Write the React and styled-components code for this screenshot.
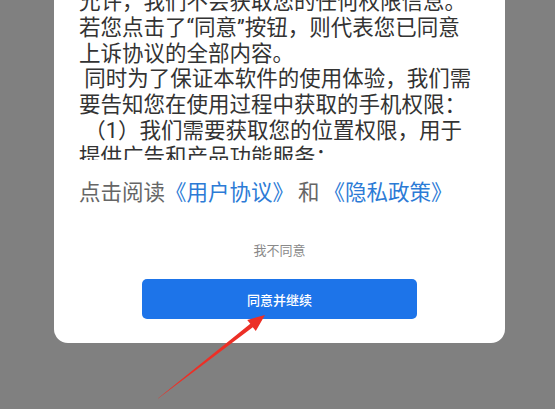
import React from "react";
import styled, { createGlobalStyle } from "styled-components";

const Global = createGlobalStyle`
  html, body {
    margin: 0;
    padding: 0;
    background: #808080;
    overflow: hidden;
  }
  body {
    font-family: "Roboto", "Noto Sans CJK SC", sans-serif;
  }
`;

const Page = styled.div`
  position: relative;
  width: 555px;
  height: 409px;
  overflow: hidden;
  background: #808080;
  display: flex;
  flex-direction: column;
  align-items: center;
  justify-content: flex-end;
  padding-bottom: 66px;
  padding-left: 4px;
  box-sizing: border-box;
`;

const Card = styled.div`
  flex-shrink: 0;
  width: 451px;
  background: #ffffff;
  border-radius: 14px;
  display: flex;
  flex-direction: column;
  align-items: center;
  padding-bottom: 24px;
  box-sizing: border-box;
`;

const ScrollArea = styled.div`
  align-self: stretch;
  height: 186px;
  overflow: hidden;
  padding: 15px 25px 0;
  box-sizing: border-box;
`;

const Line = styled.div`
  font-size: 21.5px;
  line-height: 25.8px;
  color: #333333;
  white-space: pre;
`;

const Agreement = styled.div`
  align-self: stretch;
  margin-top: 20px;
  padding: 0 25px;
  font-size: 21.5px;
  line-height: 26px;
  color: #666666;
  white-space: nowrap;
`;

const Link = styled.span`
  color: #2c7bd6;
`;

const Conj = styled.span`
  padding: 0 4px;
`;

const Disagree = styled.div`
  margin-top: 35px;
  font-size: 13px;
  line-height: 20px;
  color: #8a8a8a;
`;

const AgreeButton = styled.div`
  margin-top: 18px;
  width: 275px;
  height: 40px;
  border-radius: 5px;
  background: #1d74e9;
  color: #ffffff;
  font-size: 13px;
  font-weight: 500;
  display: flex;
  align-items: center;
  justify-content: center;
`;

const ArrowSvg = styled.svg`
  position: absolute;
  left: 0;
  top: 0;
  pointer-events: none;
`;

const lines = [
  "允许，我们不会获取您的任何权限信息。",
  "若您点击了“同意”按钮，则代表您已同意",
  "上诉协议的全部内容。",
  " 同时为了保证本软件的使用体验，我们需",
  "要告知您在使用过程中获取的手机权限：",
  " （1）我们需要获取您的位置权限，用于",
  "提供广告和产品功能服务；",
  "（2）我们需要获取您的存储权限，用于",
];

function Arrow() {
  return (
    <ArrowSvg width="555" height="409" viewBox="0 0 555 409">
      <polygon
        points="157.8,398.4 158.2,398.6 252.8,327.2 255.8,331 265,315 247.2,319.9 250.3,323.8"
        fill="#ec2f26"
      />
    </ArrowSvg>
  );
}

export default function App() {
  return (
    <>
      <Global />
      <Page>
        <Card>
          <ScrollArea>
            {lines.map((l, i) => (
              <Line key={i}>{l}</Line>
            ))}
          </ScrollArea>
          <Agreement>
            点击阅读<Link>《用户协议》</Link>
            <Conj>和</Conj>
            <Link>《隐私政策》</Link>
          </Agreement>
          <Disagree>我不同意</Disagree>
          <AgreeButton>同意并继续</AgreeButton>
        </Card>
        <Arrow />
      </Page>
    </>
  );
}
